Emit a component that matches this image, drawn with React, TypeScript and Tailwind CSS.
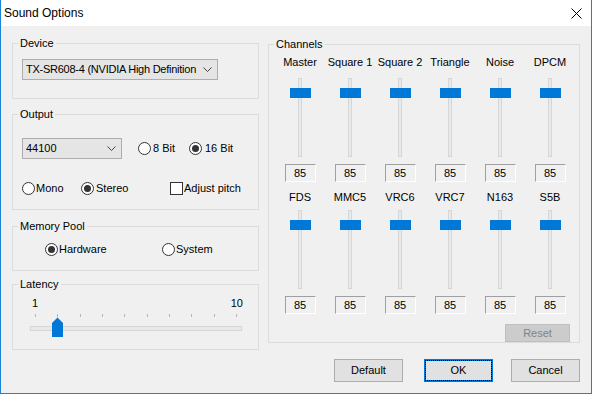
import React from "react";

function Radio({ checked }: { checked?: boolean }) {
  return (
    <span className="w-[13px] h-[13px] rounded-full border border-[#333333] bg-white flex items-center justify-center shrink-0">
      {checked && <span className="w-[7px] h-[7px] rounded-full bg-[#333333]" />}
    </span>
  );
}

function Chevron() {
  return (
    <svg width="9" height="5" viewBox="0 0 9 5" className="shrink-0">
      <polyline points="0.5,0.5 4.5,4.5 8.5,0.5" fill="none" stroke="#444" strokeWidth="1" />
    </svg>
  );
}

function Combo({ text, className, textClass }: { text: string; className: string; textClass?: string }) {
  return (
    <div className={`h-[21px] border border-[#adadad] bg-[#e5e5e5] flex items-center pl-[3px] pr-[5px] ${className}`}>
      <span className={`flex-1 whitespace-nowrap overflow-hidden ${textClass ?? ""}`}>{text}</span>
      <Chevron />
    </div>
  );
}

function Group({ title, className, children }: { title: string; className: string; children?: React.ReactNode }) {
  return (
    <div className={`border border-[#dcdcdc] ${className}`}>
      <div className="-mt-[7px] ml-[5px] px-[2px] bg-[#f0f0f0] w-fit">{title}</div>
      {children}
    </div>
  );
}

function VSlider() {
  return (
    <div className="relative h-[79px] w-[21px] flex justify-center">
      <div className="w-[4px] h-full bg-[#e7eaea] border border-[#d6d6d6]" />
      <div className="absolute left-0 top-[10px] w-[21px] h-[10px] bg-[#0078d7]" />
    </div>
  );
}

function Edit() {
  return (
    <div className="w-[31px] h-[18px] border border-t-[#a0a0a0] border-l-[#a0a0a0] border-b-white border-r-white flex items-center justify-center">
      85
    </div>
  );
}

function ChannelRow({ names, top, gap }: { names: string[]; top: string; gap: string }) {
  return (
    <div className={`grid grid-cols-6 w-[300px] ml-[6px] ${top}`}>
      {names.map((n) => (
        <div key={n} className="flex flex-col items-center">
          <div className="whitespace-nowrap">{n}</div>
          <div className={gap}>
            <VSlider />
          </div>
          <div className="mt-[7px]">
            <Edit />
          </div>
        </div>
      ))}
    </div>
  );
}

function LatencySlider() {
  const ticks = Array.from({ length: 10 }, (_, i) => 22 + i * 22.33);
  return (
    <svg width="245" height="27" viewBox="0 0 245 27" className="block mt-[1px]">
      {ticks.map((x, i) => (
        <line key={i} x1={Math.round(x) + 0.5} y1="3" x2={Math.round(x) + 0.5} y2="6" stroke="#b4b4b4" strokeWidth="1" />
      ))}
      <rect x="17.5" y="15.5" width="211" height="4" fill="#e7eaea" stroke="#d6d6d6" />
      <path d="M39 12 L44.5 6.5 L50 12 L50 26 L39 26 Z" fill="#0078d7" />
    </svg>
  );
}

export default function App() {
  return (
    <div className="w-[592px] h-[394px] bg-[#f0f0f0] border-x border-b border-[#1883d7] flex flex-col font-['Liberation_Sans',Arial,sans-serif] text-[11px] leading-[13px] text-black overflow-hidden">
      <div className="h-[26px] bg-white flex items-center justify-between pl-[3px] pr-[9px] shrink-0">
        <span className="text-[12px] leading-[14px]">Sound Options</span>
        <svg width="11" height="11" viewBox="0 0 11 11">
          <line x1="0.5" y1="0.5" x2="10.5" y2="10.5" stroke="#000" strokeWidth="1" />
          <line x1="10.5" y1="0.5" x2="0.5" y2="10.5" stroke="#000" strokeWidth="1" />
        </svg>
      </div>
      <div className="flex pl-[11px] pt-[17px]">
        <div className="w-[247px] flex flex-col">
          <Group title="Device" className="h-[56px]">
            <div className="pl-[9px] mt-[9px]">
              <Combo text="TX-SR608-4 (NVIDIA High Definition" className="w-[196px]" textClass="tracking-[-0.25px]" />
            </div>
          </Group>
          <Group title="Output" className="h-[96px] mt-[15px]">
            <div className="pl-[9px] mt-[17px] flex items-center">
              <Combo text="44100" className="w-[100px]" />
              <div className="ml-[16px] w-[51px] flex items-center gap-[2px]">
                <Radio />
                <span>8 Bit</span>
              </div>
              <div className="flex items-center gap-[3px]">
                <Radio checked />
                <span>16 Bit</span>
              </div>
            </div>
            <div className="pl-[9px] mt-[23px] flex items-center h-[13px]">
              <div className="w-[59px] flex items-center gap-[1px]">
                <Radio />
                <span>Mono</span>
              </div>
              <div className="w-[89px] flex items-center gap-[2px]">
                <Radio checked />
                <span>Stereo</span>
              </div>
              <div className="flex items-center gap-[1px]">
                <span className="w-[13px] h-[13px] border border-[#333333] bg-white shrink-0" />
                <span>Adjust pitch</span>
              </div>
            </div>
          </Group>
          <Group title="Memory Pool" className="h-[45px] mt-[16px]">
            <div className="pl-[32px] mt-[10px] flex items-center h-[13px]">
              <div className="w-[117px] flex items-center gap-[1px]">
                <Radio checked />
                <span>Hardware</span>
              </div>
              <div className="flex items-center gap-[1px]">
                <Radio />
                <span>System</span>
              </div>
            </div>
          </Group>
          <Group title="Latency" className="h-[66px] mt-[13px]">
            <div className="mt-[6px] flex justify-between pl-[19px] pr-[15px]">
              <span>1</span>
              <span>10</span>
            </div>
            <LatencySlider />
          </Group>
        </div>
        <div className="ml-[9px] mt-[1px] w-[312px] flex flex-col">
          <Group title="Channels" className="h-[299px]">
            <ChannelRow names={["Master", "Square 1", "Square 2", "Triangle", "Noise", "DPCM"]} top="mt-[5px]" gap="mt-[9px]" />
            <ChannelRow names={["FDS", "MMC5", "VRC6", "VRC7", "N163", "S5B"]} top="mt-[9px]" gap="mt-[6px]" />
            <div className="flex justify-end pr-[9px] mt-[10px]">
              <div className="w-[65px] h-[18px] bg-[#cccccc] border border-[#bfbfbf] text-[#838383] flex items-center justify-center">
                Reset
              </div>
            </div>
          </Group>
          <div className="flex mt-[16px] ml-[66px]">
            <div className="w-[69px] h-[23px] bg-[#e1e1e1] border border-[#adadad] flex items-center justify-center">
              Default
            </div>
            <div className="ml-[21px] w-[69px] h-[23px] bg-[#e1e1e1] border border-[#0078d7] shadow-[inset_0_0_0_1px_#0078d7] outline-1 outline-dotted outline-black -outline-offset-2 flex items-center justify-center">
              OK
            </div>
            <div className="ml-[18px] w-[69px] h-[23px] bg-[#e1e1e1] border border-[#adadad] flex items-center justify-center">
              Cancel
            </div>
          </div>
        </div>
      </div>
    </div>
  );
}
